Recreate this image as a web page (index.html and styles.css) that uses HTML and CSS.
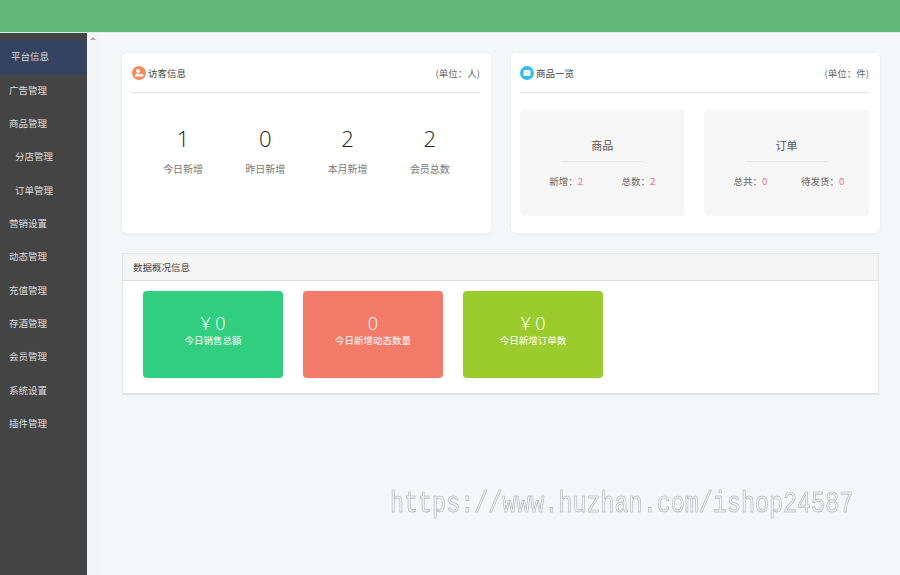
FILE: index.html
```html
<!DOCTYPE html>
<html lang="zh-CN">

<head>
    <title>平台信息</title>
    <link rel="stylesheet" href="styles.css">
</head>

<body>
    <div class="header"></div>

    <div class="layout">
        <div class="sidebar">
            <div class="menu-item active">平台信息</div>
            <div class="menu-item">广告管理</div>
            <div class="menu-item">商品管理</div>
            <div class="menu-item sub">分店管理</div>
            <div class="menu-item sub">订单管理</div>
            <div class="menu-item">营销设置</div>
            <div class="menu-item">动态管理</div>
            <div class="menu-item">充值管理</div>
            <div class="menu-item">存酒管理</div>
            <div class="menu-item">会员管理</div>
            <div class="menu-item">系统设置</div>
            <div class="menu-item">插件管理</div>
        </div>

        <div class="scroll-track">
            <div class="scroll-arrow"></div>
        </div>

        <div class="content">
            <div class="top-row">
                <div class="card">
                    <div class="card-head">
                        <svg class="card-icon" viewBox="0 0 14 14">
                            <circle cx="7" cy="7" r="7" fill="#f58a5c"/>
                            <circle cx="6" cy="5" r="2" fill="#fff"/>
                            <path d="M3 10.5c0-2 1.4-3 3-3s3 1 3 3z" fill="#fff"/>
                            <circle cx="9.8" cy="9.3" r="1.5" fill="#fff"/>
                        </svg>
                        <span class="card-title">访客信息</span>
                        <span class="card-unit">(单位：人)</span>
                    </div>
                    <div class="stats">
                        <div class="stat"><div class="stat-num">1</div><div class="stat-label">今日新增</div></div>
                        <div class="stat"><div class="stat-num">0</div><div class="stat-label">昨日新增</div></div>
                        <div class="stat"><div class="stat-num">2</div><div class="stat-label">本月新增</div></div>
                        <div class="stat"><div class="stat-num">2</div><div class="stat-label">会员总数</div></div>
                    </div>
                </div>

                <div class="card card-goods">
                    <div class="card-head">
                        <svg class="card-icon" viewBox="0 0 14 14">
                            <circle cx="7" cy="7" r="7" fill="#35bdf0"/>
                            <rect x="3.5" y="4" width="7" height="6" rx="1" fill="#fff"/>
                            <path d="M3.8 5l3.2 2 3.2-2" fill="none" stroke="#9fe0f8" stroke-width=".7"/>
                        </svg>
                        <span class="card-title">商品一览</span>
                        <span class="card-unit">(单位：件)</span>
                    </div>
                    <div class="overview">
                        <div class="box">
                            <div class="box-title">商品</div>
                            <div class="box-row">
                                <span>新增：<em>2</em></span>
                                <span>总数：<em>2</em></span>
                            </div>
                        </div>
                        <div class="box">
                            <div class="box-title">订单</div>
                            <div class="box-row">
                                <span>总共：<em>0</em></span>
                                <span>待发货：<em>0</em></span>
                            </div>
                        </div>
                    </div>
                </div>
            </div>

            <div class="panel">
                <div class="panel-head">数据概况信息</div>
                <div class="panel-body">
                    <div class="tile tile-green"><div class="tile-num">¥ 0</div><div class="tile-label">今日销售总额</div></div>
                    <div class="tile tile-red"><div class="tile-num">0</div><div class="tile-label">今日新增动态数量</div></div>
                    <div class="tile tile-lime"><div class="tile-num">¥ 0</div><div class="tile-label">今日新增订单数</div></div>
                </div>
            </div>
        </div>
    </div>

    <div class="watermark">https://www.huzhan.com/ishop24587</div>
</body>

</html>
```

FILE: styles.css
```css
html,
body {
    height: 100%;
}

body {
    font-family: "Noto Sans CJK SC", "Liberation Sans", sans-serif;
    margin: 0;
    padding: 0;
    background-color: #f4f6f8;
    color: #444;
    font-size: 9.5px;
    overflow: hidden;
}

.header {
    height: 32px;
    background-color: #5fb878;
    border-bottom: 1px solid #e4efe7;
}

.layout {
    display: flex;
    height: 542px;
}

.sidebar {
    width: 87px;
    padding-top: 7.4px;
    background-color: #444;
    color: #ddd;
    flex-shrink: 0;
}

.menu-item {
    height: 33.33px;
    line-height: 33.33px;
    padding-left: 9px;
}

.menu-item.active {
    background-color: #34435f;
    padding-left: 11px;
}

.menu-item.sub {
    padding-left: 15px;
}

.scroll-track {
    width: 12px;
    padding: 4px 0 0 3px;
    box-sizing: border-box;
    background-color: #f3f5f7;
}

.scroll-arrow {
    width: 0;
    height: 0;
    border-left: 3px solid transparent;
    border-right: 3px solid transparent;
    border-bottom: 3px solid #aaa;
}

.content {
    padding: 20px 0 0 23px;
}

.top-row {
    display: flex;
    gap: 20px;
}

.card {
    width: 369px;
    height: 180px;
    box-sizing: border-box;
    padding: 0 11px 0 10px;
    background: white;
    border-radius: 5px;
    box-shadow: 0 1px 4px rgba(0, 0, 0, 0.05);
}

.card-goods {
    padding-left: 9px;
}

.card-head {
    display: flex;
    align-items: center;
    height: 39px;
    border-bottom: 1px solid #e8e8e8;
}

.card-icon {
    width: 14px;
    height: 14px;
    margin-right: 2px;
}

.card-title {
    flex-grow: 1;
}

.card-unit {
    color: #666;
}

.stats {
    display: flex;
    padding: 33px 9px 0 10px;
}

.stat {
    flex: 1;
    text-align: center;
}

.stat-num {
    font-size: 22px;
    line-height: 24px;
    font-weight: 300;
    color: #222;
    font-family: "Open Sans", sans-serif;
}

.stat-label {
    margin-top: 12px;
    line-height: 14px;
    font-size: 10px;
    color: #777;
}

.overview {
    display: flex;
    gap: 20px;
    padding-top: 17px;
}

.box {
    width: 164.4px;
    height: 106px;
    box-sizing: border-box;
    padding-top: 27px;
    background-color: #f6f6f6;
    border-radius: 4px;
    color: #666;
}

.box-title {
    width: 82px;
    margin: 0 auto;
    height: 24px;
    line-height: 16px;
    font-size: 11px;
    text-align: center;
    border-bottom: 1px solid #e8e8e8;
    color: #555;
}

.box-row {
    display: flex;
    padding: 12px 10px 0;
}

.box-row span {
    flex: 1;
    text-align: center;
}

.box-row em {
    font-style: normal;
    color: #ee6f8d;
}

.panel {
    width: 757px;
    height: 142px;
    box-sizing: border-box;
    margin-top: 20px;
    background: white;
    border: 1px solid #e6e6e6;
    border-bottom: 2px solid #e2e2e2;
}

.panel-head {
    height: 26px;
    line-height: 26px;
    padding-left: 10px;
    background-color: #f5f5f5;
    border-bottom: 1px solid #ddd;
}

.panel-body {
    display: flex;
    gap: 20px;
    padding: 10px 20px;
}

.tile {
    width: 140px;
    height: 87px;
    box-sizing: border-box;
    padding-top: 20px;
    border-radius: 4px;
    color: white;
    text-align: center;
    box-shadow: 0 0 2px rgba(0, 0, 0, 0.08);
}

.tile-green {
    background-color: #32ce80;
}

.tile-red {
    background-color: #f37b69;
}

.tile-lime {
    background-color: #9bcc2e;
}

.tile-num {
    font-size: 18px;
    line-height: 24px;
    font-weight: 300;
    font-family: "Open Sans", "Noto Sans CJK SC", sans-serif;
}

.tile-label {
    margin-top: -2px;
    line-height: 14px;
}

.watermark {
    position: absolute;
    left: 390px;
    top: 489px;
    font-family: "Liberation Mono", monospace;
    font-size: 23.4px;
    line-height: 30px;
    color: #f4f6f8;
    -webkit-text-stroke: 0.5px #aaa;
    transform: scaleY(1.3);
    will-change: transform;
}
```
